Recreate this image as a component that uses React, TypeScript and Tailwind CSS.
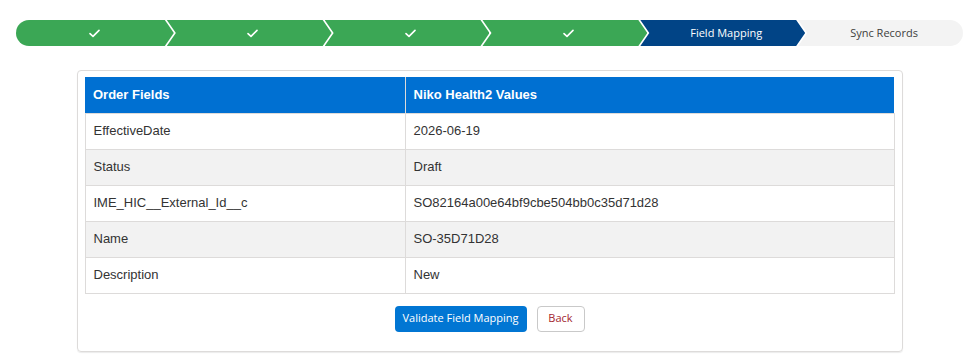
import React from "react";

const Check = () => (
  <svg width="11" height="9" viewBox="0 0 11 9" fill="none">
    <path d="M1 4.6 L4 7.4 L10 1.4" stroke="white" strokeWidth="1.6" strokeLinecap="round" strokeLinejoin="round" />
  </svg>
);

const rows: [string, string][] = [
  ["EffectiveDate", "2026-06-19"],
  ["Status", "Draft"],
  ["IME_HIC__External_Id__c", "SO82164a00e64bf9cbe504bb0c35d71d28"],
  ["Name", "SO-35D71D28"],
  ["Description", "New"],
];

export default function App() {
  return (
    <div className="w-[979px] h-[361px] bg-white overflow-hidden" style={{ fontFamily: '"Liberation Sans", Arial, sans-serif' }}>
      <div className="pt-[20px] px-[16px]">
        <div className="flex h-[26px] rounded-full overflow-hidden bg-white">
          {[0, 1, 2, 3].map((i) => (
            <div
              key={i}
              className={
                "flex-1 bg-[#3ba755] flex items-center justify-center " +
                (i === 0
                  ? "[clip-path:polygon(0_0,calc(100%_-_9px)_0,100%_50%,calc(100%_-_9px)_100%,0_100%)]"
                  : "-ml-[7px] pl-[7px] [clip-path:polygon(0_0,calc(100%_-_9px)_0,100%_50%,calc(100%_-_9px)_100%,0_100%,9px_50%)]")
              }
            >
              <Check />
            </div>
          ))}
          <div className="flex-1 -ml-[7px] pl-[7px] bg-[#014486] flex items-center justify-center text-white text-[11px] [clip-path:polygon(0_0,calc(100%_-_9px)_0,100%_50%,calc(100%_-_9px)_100%,0_100%,9px_50%)]" style={{ fontFamily: '"Open Sans", sans-serif' }}>
            Field Mapping
          </div>
          <div className="flex-1 -ml-[7px] pl-[7px] bg-[#f3f3f3] flex items-center justify-center text-[#3e3e3c] text-[11px] [clip-path:polygon(0_0,100%_0,100%_100%,0_100%,9px_50%)]" style={{ fontFamily: '"Open Sans", sans-serif' }}>
            Sync Records
          </div>
        </div>
      </div>

      <div className="mx-auto mt-[24px] w-[826px] border border-[#dddbda] rounded-[4px] shadow-[0_1px_1px_rgba(0,0,0,0.08)] px-[7px] pt-[6px] pb-[19px]">
        <table className="w-full border-collapse text-[13px] text-[#333]">
          <thead>
            <tr className="bg-[#0070d2] text-white h-[36px]">
              <th className="w-[320px] text-left font-bold pl-[8px] border-r border-[#dddbda]">Order Fields</th>
              <th className="text-left font-bold pl-[8px]">Niko Health2 Values</th>
            </tr>
          </thead>
          <tbody>
            {rows.map(([a, b], i) => (
              <tr key={a} className={(i % 2 === 1 ? "bg-[#f2f2f2] " : "bg-white ") + "h-[36px]"}>
                <td className="pl-[8px] border border-[#dddbda]">{a}</td>
                <td className="pl-[8px] border border-[#dddbda]">{b}</td>
              </tr>
            ))}
          </tbody>
        </table>
        <div className="flex justify-center gap-[10px] mt-[12px]" style={{ fontFamily: '"Open Sans", sans-serif' }}>
          <button className="h-[26px] w-[132px] rounded-[4px] bg-[#0176d3] text-white text-[11px]">Validate Field Mapping</button>
          <button className="h-[26px] w-[48px] rounded-[4px] border border-[#c9c9c9] bg-white text-[#a3262f] text-[11px]">Back</button>
        </div>
      </div>
    </div>
  );
}
